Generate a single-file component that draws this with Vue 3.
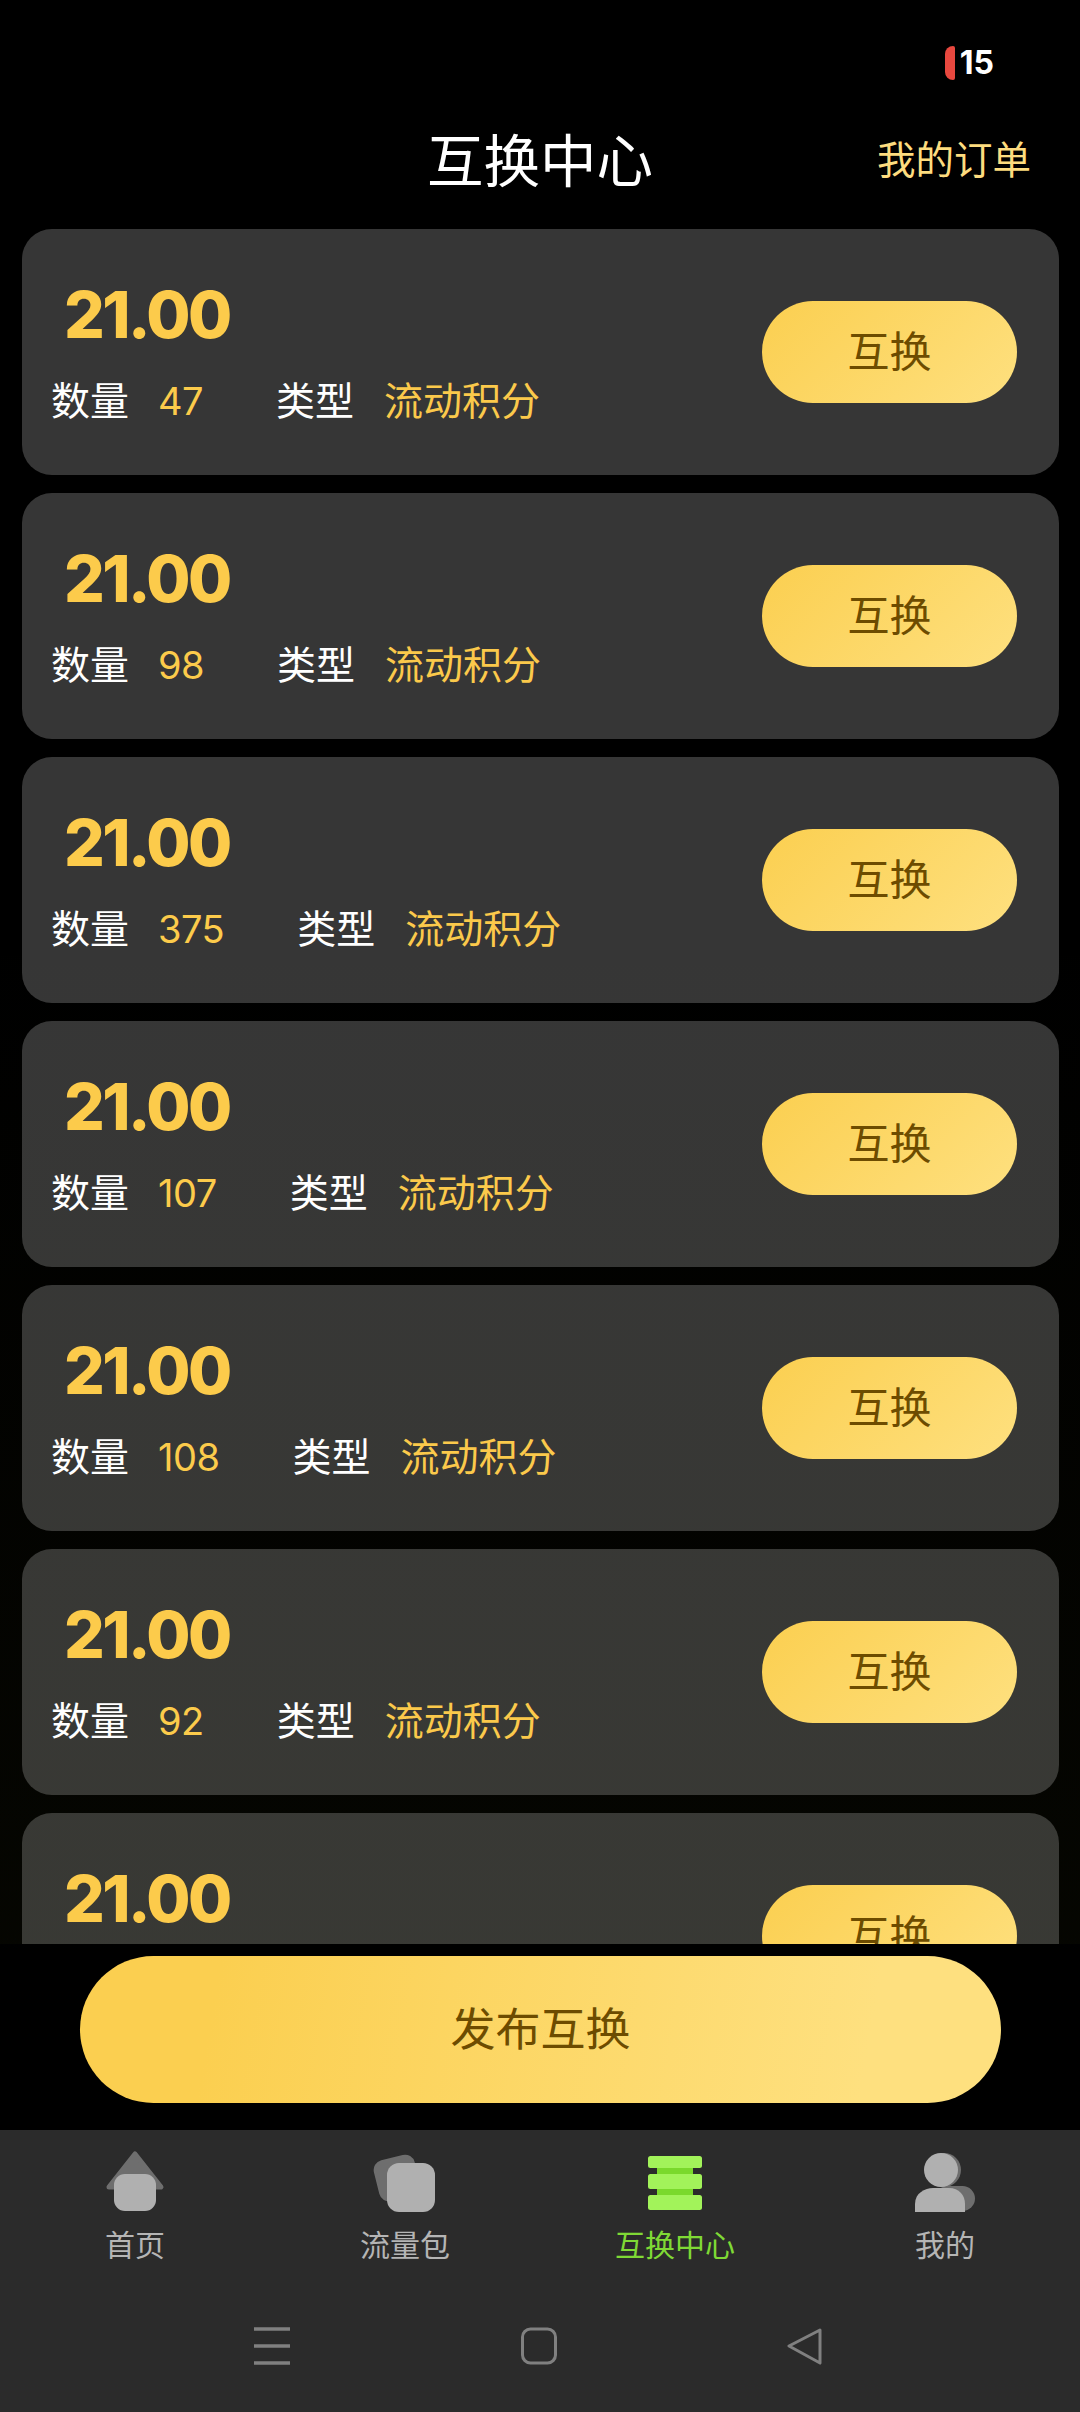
<script setup>
const counts = [47, 98, 375, 107, 108, 92, 66]
</script>

<template>
  <div class="page">
    <div class="status">
      <span class="bat"></span>
      <span class="bat-num">15</span>
    </div>
    <header class="head">
      <h1 class="title">互换中心</h1>
      <span class="orders">我的订单</span>
    </header>
    <main class="list">
      <section v-for="n in counts" :key="n" class="card">
        <div class="info">
          <div class="price">21.00</div>
          <div class="meta">
            <span class="lab">数量</span>
            <span class="num">{{ n }}</span>
            <span class="lab type">类型</span>
            <span class="val">流动积分</span>
          </div>
        </div>
        <button class="swap">互换</button>
      </section>
    </main>
    <div class="foot">
      <button class="publish">发布互换</button>
    </div>
    <nav class="tabs">
      <div class="tab">
        <svg class="ico" viewBox="0 0 64 64" width="64" height="64">
          <path d="M32 4 L58 37 H6 Z" fill="#6e6e6e" stroke="#6e6e6e" stroke-width="5" stroke-linejoin="round"/>
          <rect x="11" y="24" width="42" height="37" rx="11" fill="#b0b0b0"/>
        </svg>
        <span>首页</span>
      </div>
      <div class="tab">
        <svg class="ico" viewBox="0 0 64 64" width="64" height="64">
          <rect x="3" y="7" width="42" height="42" rx="10" fill="#6e6e6e" transform="rotate(-14 24 28)"/>
          <rect x="14" y="13" width="48" height="49" rx="12" fill="#b0b0b0"/>
        </svg>
        <span>流量包</span>
      </div>
      <div class="tab active">
        <svg class="ico" viewBox="0 0 64 64" width="64" height="64">
          <rect x="14" y="12" width="36" height="44" fill="#7ad92c"/>
          <rect x="5" y="6" width="54" height="12" rx="2.5" fill="#a2f35a"/>
          <rect x="5" y="24" width="54" height="15" rx="2.5" fill="#a2f35a"/>
          <rect x="5" y="45" width="54" height="15" rx="2.5" fill="#a2f35a"/>
        </svg>
        <span>互换中心</span>
      </div>
      <div class="tab">
        <svg class="ico" viewBox="0 0 64 64" width="64" height="64">
          <circle cx="31" cy="20" r="17" fill="#6e6e6e"/>
          <rect x="22" y="36" width="40" height="25" rx="12.5" fill="#6e6e6e"/>
          <circle cx="28" cy="20" r="17" fill="#b0b0b0"/>
          <path d="M2 62 V54 C2 43 12 38 20 38 H36 C46 38 52 45 52 54 V62 Z" fill="#b0b0b0"/>
        </svg>
        <span>我的</span>
      </div>
      <div class="sys">
        <svg viewBox="0 0 36 38" width="36" height="38"><path d="M0 2h36M0 19h36M0 36h36" stroke="#808080" stroke-width="3.4" fill="none"/></svg>
        <svg class="sq" viewBox="0 0 36 38" width="36" height="38"><rect x="1.5" y="2" width="33" height="34" rx="8" stroke="#808080" stroke-width="3" fill="none"/></svg>
        <svg class="bk" viewBox="0 0 36 38" width="36" height="38"><path d="M33 3 L2 19 L33 36 Z" stroke="#808080" stroke-width="3" stroke-linejoin="round" fill="none"/></svg>
      </div>
    </nav>
  </div>
</template>

<style>
html, body { margin: 0; background: #000; }
</style>

<style scoped>
.page {
  width: 1080px;
  height: 2412px;
  display: flex;
  flex-direction: column;
  background: #000;
  font-family: "Noto Sans CJK SC", "Noto Sans", sans-serif;
  overflow: hidden;
}
.status {
  height: 122px;
  box-sizing: border-box;
  padding: 46px 86px 0 0;
  display: flex;
  justify-content: flex-end;
  align-items: flex-start;
  gap: 5px;
}
.bat {
  width: 10px;
  height: 34px;
  border-radius: 8px 2px 2px 8px;
  background: #e8483f;
}
.bat-num {
  color: #fff;
  font: 700 32px/34px Inter, sans-serif;
}
.head {
  position: relative;
  height: 107px;
  display: flex;
  justify-content: center;
}
.title {
  margin: 0;
  font-size: 56.5px;
  font-weight: 400;
  line-height: 70px;
  color: #fff;
}
.orders {
  position: absolute;
  right: 49px;
  top: 0;
  font-size: 38.5px;
  line-height: 70px;
  color: #fddc7f;
}
.list {
  position: relative;
  flex: 1;
  min-height: 0;
  overflow: hidden;
  padding: 0 21px 0 22px;
  display: flex;
  flex-direction: column;
  gap: 18px;
}
.list::after {
  content: "";
  position: absolute;
  inset: 0;
  z-index: 0;
  pointer-events: none;
  background: linear-gradient(180deg, rgba(100, 110, 20, 0) 40%, rgba(100, 110, 20, 0.05) 100%);
}
.card {
  flex: none;
  height: 246px;
  box-sizing: border-box;
  padding: 0 42px 0 29px;
  border-radius: 30px;
  background: #363636;
  display: flex;
  align-items: center;
  justify-content: space-between;
}
.info {
  position: relative;
  z-index: 1;
}
.price {
  padding: 1px 0 0 13px;
  font: 800 64px/65px Inter, sans-serif;
  letter-spacing: -2.5px;
  color: #fccb4b;
}
.meta {
  margin-top: 26px;
  height: 50px;
  display: flex;
  align-items: center;
  font-size: 39px;
}
.lab { color: #fff; }
.num {
  margin-left: 29px;
  padding-top: 6px;
  color: #fccb4b;
  font: 400 38px/48px Inter, sans-serif;
  letter-spacing: -0.5px;
}
.type { margin-left: 73px; }
.val { margin-left: 30px; color: #fbc94b; }
button {
  border: 0;
  font-family: inherit;
  color: #6d4c00;
  cursor: pointer;
}
.swap {
  position: relative;
  z-index: 1;
  width: 255px;
  height: 102px;
  padding: 0 0 8px;
  border-radius: 51px;
  font-size: 42px;
  background: linear-gradient(135deg, #fbcf50, #fee07f);
}
.foot {
  height: 186px;
  box-sizing: border-box;
  padding: 12px 79px 0 80px;
  background: #000;
  position: relative;
  z-index: 2;
}
.publish {
  width: 100%;
  height: 147px;
  padding: 0 0 6px;
  border-radius: 74px;
  font-size: 45px;
  background: linear-gradient(100deg, #fbcf50 15%, #fee07f 85%);
}
.tabs {
  height: 282px;
  background: #2b2b2b;
  display: grid;
  grid-template-columns: repeat(4, 270px);
  grid-template-rows: 168px 1fr;
}
.tab {
  display: flex;
  flex-direction: column;
  align-items: center;
  padding-top: 20px;
  color: #b5b5b5;
  font-size: 30px;
  line-height: 42px;
}
.tab.active { color: #7fd935; }
.ico { margin-bottom: 8px; display: block; }
.sys {
  grid-column: 1 / -1;
  padding-top: 29px;
  height: 40px;
  display: flex;
  justify-content: center;
  gap: 232px;
}
.sq { transform: translateX(-1px); }
.bk { transform: translateX(-3px); }
</style>
